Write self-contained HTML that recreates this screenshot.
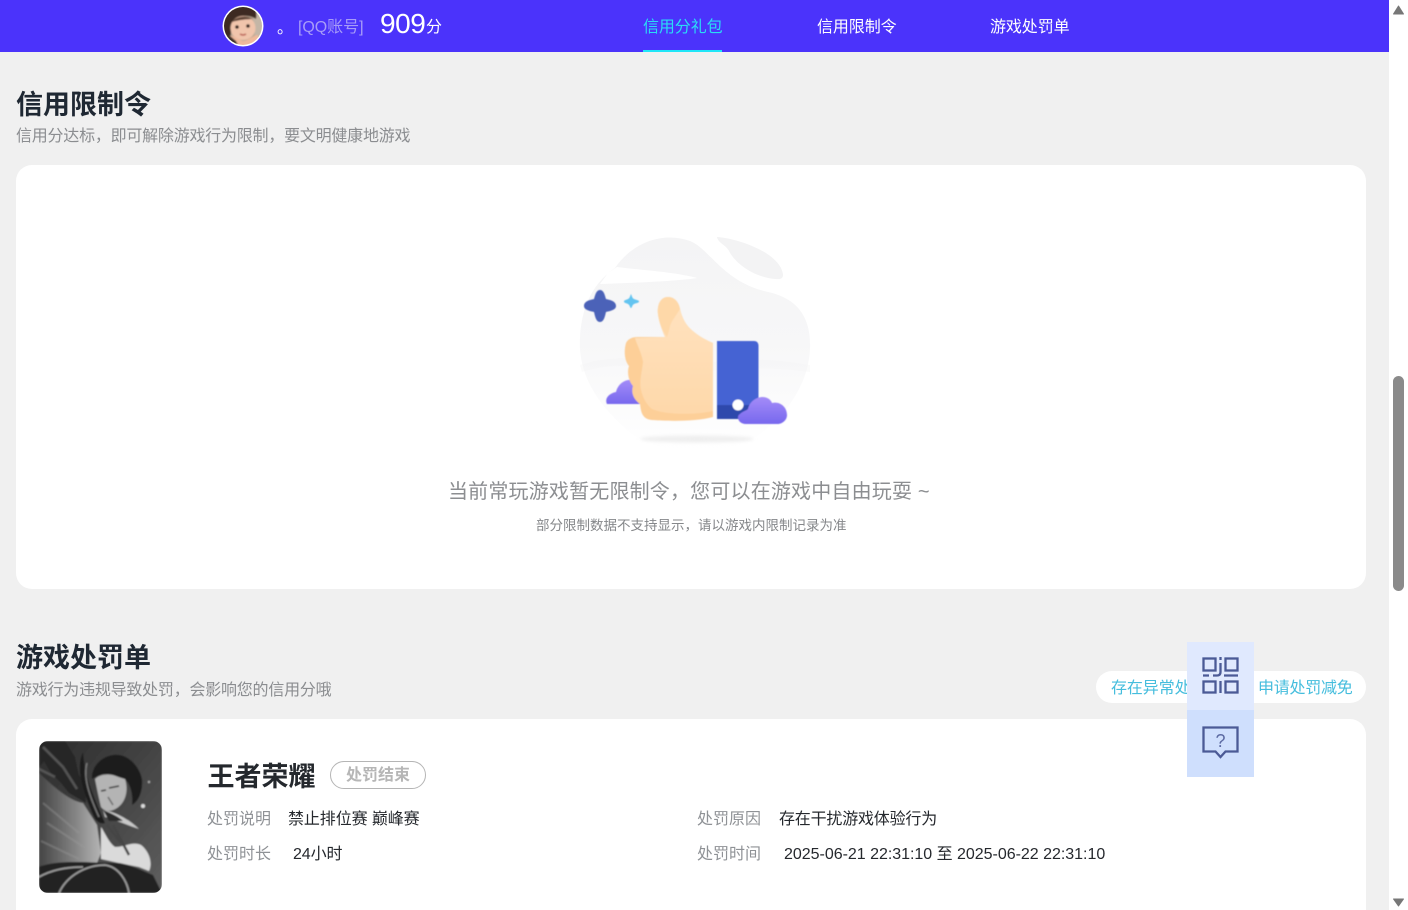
<!DOCTYPE html>
<html lang="zh-CN">
<head>
<meta charset="utf-8">
<title>信用限制令</title>
<style>
html,body{margin:0;padding:0;width:1408px;height:910px;overflow:hidden;background:#fff}
body{position:relative;font-family:"Liberation Sans","Noto Sans CJK SC",sans-serif}
.a{position:absolute;white-space:nowrap;line-height:1}
.main{position:absolute;left:0;top:0;width:1389px;height:910px;background:#f0f0f0;overflow:hidden}
.nav{position:absolute;left:0;top:0;width:1389px;height:52px;background:#4b33fb}
.card{position:absolute;background:#fff;border-radius:16px}
.h{font-size:27px;font-weight:700;color:#1f2833}
.s{font-size:16px;color:#8b8d90;letter-spacing:-.23px}
.l{font-size:16px;color:#8f9296}
.v{font-size:16px;color:#25282d;letter-spacing:-.1px}
svg{position:absolute;display:block}
</style>
</head>
<body>
<div class="main">
  <div class="nav"></div>

  <svg style="left:222px;top:5px" width="42" height="42" viewBox="0 0 42 42">
    <defs>
      <clipPath id="av"><circle cx="21" cy="21" r="19"/></clipPath>
      <filter id="b1" x="-10%" y="-10%" width="120%" height="120%"><feGaussianBlur stdDeviation=".7"/></filter>
    </defs>
    <circle cx="21" cy="21" r="20.500" fill="#fff"/>
    <g clip-path="url(#av)"><g filter="url(#b1)">
      <rect width="42" height="42" fill="#bda994"/>
      <path d="M30 0H44V42H34Z" fill="#c4b6a6"/>
      <path d="M0 0H32C34 5 35 9 34 14 28 10 20 10 14 14 10 18 9 24 9 30L4 36 0 34Z" fill="#3d2a22"/>
      <ellipse cx="21" cy="23" rx="12.500" ry="12" fill="#f1c5ac"/>
      <path d="M10 17C14 11 25 10 31 14 26 14 16 15 10 17Z" fill="#5a3f33"/>
      <circle cx="15" cy="22" r="1.800" fill="#2b1b15"/><circle cx="26" cy="21" r="1.800" fill="#2b1b15"/>
      <path d="M18 29Q21 31 24 29" stroke="#b8594f" stroke-width="1.400" fill="none"/>
      <path d="M7 31C12 30 17 35 21 36 26 36 32 30 36 30 37 36 36 42 30 44H12Z" fill="#efb99c"/>
      <path d="M0 32 7 30 14 36 18 44H0Z" fill="#3d3128"/>
    </g></g>
  </svg>
  <div class="a" style="left:277px;top:21px;font-size:16px;color:#fff">。</div>
  <div class="a" style="left:298px;top:20px;font-size:16px;color:#a79cf8;letter-spacing:-.05px">[QQ账号]</div>
  <div class="a" style="left:380px;top:10px;font-size:28px;color:#fff;letter-spacing:-.45px">909</div>
  <div class="a" style="left:426px;top:20px;font-size:16px;color:#fff">分</div>
  <div class="a" style="left:643px;top:20px;font-size:16px;color:#2adcf5;letter-spacing:-.1px">信用分礼包</div>
  <div style="position:absolute;left:643px;top:50px;width:79px;height:2px;background:#20e6f7"></div>
  <div class="a" style="left:817px;top:20px;font-size:16px;color:#fff;letter-spacing:-.1px">信用限制令</div>
  <div class="a" style="left:990px;top:20px;font-size:16px;color:#fff;letter-spacing:-.1px">游戏处罚单</div>

  <div class="a h" style="left:16px;top:92px">信用限制令</div>
  <div class="a s" style="left:16px;top:129px">信用分达标，即可解除游戏行为限制，要文明健康地游戏</div>

  <div class="card" style="left:16px;top:165px;width:1350px;height:424px"></div>

  <svg style="left:570px;top:225px" width="250" height="240" viewBox="570 225 250 240">
    <defs>
      <linearGradient id="bg" x1="0" y1="0" x2="0" y2="1"><stop offset="0" stop-color="#f4f4f5"/><stop offset=".5" stop-color="#f7f7f8"/><stop offset="1" stop-color="#fff"/></linearGradient>
      <linearGradient id="cl" x1="0" y1="0" x2="0" y2="1"><stop offset="0" stop-color="#a48cf8"/><stop offset="1" stop-color="#7768ee"/></linearGradient>
      <linearGradient id="hand" x1="0" y1="0" x2="0" y2="1"><stop offset="0" stop-color="#ffe3c0"/><stop offset="1" stop-color="#fed8aa"/></linearGradient>
      <filter id="b2" x="-5%" y="-5%" width="110%" height="110%"><feGaussianBlur stdDeviation=".45"/></filter>
      <filter id="b3" x="-10%" y="-50%" width="120%" height="200%"><feGaussianBlur stdDeviation="1.500"/></filter>
    </defs>
    <path d="M615 268C632 243 662 231 690 241 710 249 723 282 768 292 800 299 811 320 810 348 809 384 785 418 755 437 725 456 660 459 627 430 595 402 578 372 580 338 581 312 590 285 615 268Z" fill="url(#bg)"/>
    <path d="M617 267C640 270 675 272 697 278 680 281 630 283 600 284L608 273Z" fill="#fff"/>
    <path d="M717 237C735 238 772 250 781 268 785 277 783 280 775 279 753 277 735 263 729 251 726 245 718 243 717 237Z" fill="#f3f3f4"/>
    <path d="M580 365C610 355 640 358 665 362 700 368 740 352 810 365V372C740 362 700 376 660 370 630 364 605 364 582 372Z" fill="#f3f3f4" opacity=".35"/>
    <ellipse cx="697" cy="439" rx="57" ry="3.500" fill="#efefef" filter="url(#b3)"/>
    <g filter="url(#b2)">
      <path d="M607 404C604 398 610 393 616 392 619 380 632 376 640 384V404Z" fill="url(#cl)"/>
      <path d="M600 290C604 290 605 296 606 299 610 300 616 301 616 306 616 310 610 311 606 312 605 316 604 322 600 322 596 322 595 316 594 312 590 311 584 310 584 306 584 301 590 300 594 299 595 296 596 290 600 290Z" fill="#4b62b8"/>
      <path d="M631 294C632 296 632 298 634 299 636 300 639 300 639 301.500 639 303 636 303 634 304 632 305 632 308 631 308 630 308 630 305 628 304 626 303 624 303 624 301.500 624 300 626 300 628 299 630 298 630 296 631 294Z" fill="#63c4f0"/>
      <path d="M658 314C657 304 661 297 668 297 675 297 679 303 680 309 682 318 686 326 694 332 700 337 706 340 713 343V417C695 422 665 421 652 420 642 419 641 412 640 404 633 399 631 392 633 386 628 380 627 372 629 366 624 360 624 350 626 343 628 339 632 337 638 337H665C662 330 659 322 658 314Z" fill="#fdcf98"/>
      <path d="M658 314C657 304 661 297 668 297 675 297 679 303 680 309 682 318 686 326 694 332 700 337 706 340 713 343V411C695 415 665 415 652 409 646 404 643 398 641 390 639 382 642 372 643 362 642 354 637 345 635 338L665 337C662 330 659 322 658 314Z" fill="url(#hand)"/>
      <path d="M658 314C657 304 661 297 668 297 675 297 679 303 680 309 676 316 672 320 670 326 669 331 668 334 667 337 662 330 659 322 658 314Z" fill="#fed8a8"/>
      <path d="M717 341H754C757 341 758.500 343 758.500 346V419H717Z" fill="#4563d3"/>
      <path d="M717 405H750V419H717Z" fill="#2f48ac"/>
      <circle cx="738" cy="405" r="5.500" fill="#fff"/>
      <path d="M746 424C738 424 736 416 740 414 743 411 746 411 748 409 751 396 768 393 772 403 780 401 787 407 787 415 787 421 781 424 778 424Z" fill="url(#cl)"/>
    </g>
  </svg>

  <div class="a" style="left:448px;top:482px;font-size:20px;color:#8c8e91;letter-spacing:.18px">当前常玩游戏暂无限制令，您可以在游戏中自由玩耍 ~</div>
  <div class="a" style="left:536px;top:519px;font-size:13.500px;color:#85878a">部分限制数据不支持显示，请以游戏内限制记录为准</div>

  <div class="a h" style="left:16px;top:645px">游戏处罚单</div>
  <div class="a s" style="left:16px;top:683px">游戏行为违规导致处罚，会影响您的信用分哦</div>

  <div style="position:absolute;left:1096px;top:671px;width:270px;height:32px;background:#fff;border-radius:16px"></div>
  <div class="a" style="left:1111px;top:681px;font-size:16px;color:#45bddd;letter-spacing:-.1px">存在异常处罚吗？</div>
  <div class="a" style="left:1258px;top:681px;font-size:16px;color:#45bddd;letter-spacing:-.25px">申请处罚减免</div>

  <div class="card" style="left:16px;top:719px;width:1350px;height:191px;border-radius:16px 16px 0 0"></div>

  <svg style="left:39px;top:741px" width="123" height="152" viewBox="0 0 123 152">
    <defs>
      <clipPath id="gm"><rect width="123" height="152" rx="9"/></clipPath>
      <linearGradient id="gb" x1="0" y1="0" x2="1" y2="1"><stop offset="0" stop-color="#2b2b2b"/><stop offset=".5" stop-color="#444"/><stop offset="1" stop-color="#5f5f5f"/></linearGradient>
      <linearGradient id="gw" x1="0" y1="0" x2="1" y2="0"><stop offset="0" stop-color="#444"/><stop offset=".55" stop-color="#808080"/><stop offset="1" stop-color="#b5b5b5"/></linearGradient>
      <filter id="b4" x="-5%" y="-5%" width="110%" height="110%"><feGaussianBlur stdDeviation=".8"/></filter>
    </defs>
    <g clip-path="url(#gm)"><g filter="url(#b4)">
      <rect width="123" height="152" fill="url(#gb)"/>
      <path d="M0 32C14 45 30 60 44 62L58 84 62 112 58 122 30 128 0 124Z" fill="url(#gw)"/>
      <path d="M4 62 40 92M8 82 48 108M2 100 40 118" stroke="#9a9a9a" stroke-width="2" fill="none" opacity=".4"/>
      <path d="M0 0H26L36 16 40 34 46 44 47 62 30 52 22 42 12 32 5 20 0 26Z" fill="#262626"/>
      <path d="M4 6 24 26 38 48M0 28 16 36" stroke="#555" stroke-width="2.500" fill="none"/>
      <path d="M44 11C36 28 44 50 54 74 56 80 62 84 66 82 58 62 46 40 44 11Z" fill="#1f1f1f"/>
      <path d="M48 22C44 36 50 54 60 76" stroke="#7a7a7a" stroke-width="1.500" fill="none"/>
      <path d="M56 38C62 32 74 32 86 38 90 50 86 62 78 67 72 71 66 71 62 66 60 58 58 48 56 38Z" fill="#b4b4b4"/>
      <path d="M53 38C52 28 60 16 74 14 88 12 100 24 103 38 104 50 100 60 93 64 94 54 92 44 86 38 78 36 72 32 64 33 60 34 56 36 53 38Z" fill="#1d1d1d"/>
      <path d="M70 47 80 45M62 50 67 49" stroke="#333" stroke-width="1.500"/>
      <path d="M69 56 74 64" stroke="#666" stroke-width="1.500"/>
      <path d="M64 69C74 70 90 78 100 88 88 84 74 78 66 76Z" fill="#c9c9c9"/>
      <path d="M64 69C72 72 80 76 84 80L70 80Z" fill="#2a2a2a"/>
      <path d="M62 86C66 92 70 102 76 106 86 106 94 100 102 104 110 110 114 122 110 130L100 126 80 122 62 118Z" fill="#dadada"/>
      <path d="M68 84 82 102M74 84 90 114" stroke="#444" stroke-width="2.500" fill="none"/>
      <path d="M0 126C20 118 50 122 80 122 92 124 104 130 114 134L123 152H0Z" fill="#212121"/>
      <path d="M20 152C28 134 48 124 66 124 80 126 88 140 90 152M0 136C14 128 30 126 44 126" stroke="#9c9c9c" stroke-width="1.800" fill="none"/>
      <circle cx="110" cy="41" r="1.200" fill="#aaa"/><circle cx="104" cy="65" r="2" fill="#ddd"/>
    </g></g>
  </svg>

  <div class="a" style="left:207.500px;top:764px;font-size:27px;font-weight:700;color:#24282d">王者荣耀</div>
  <div style="position:absolute;left:330px;top:761px;width:94px;height:26px;border:1px solid #b5b5b5;border-radius:14px;background:#fff"></div>
  <div class="a" style="left:346px;top:768px;font-size:16px;font-weight:700;color:#b6b6b6">处罚结束</div>

  <div class="a l" style="left:207px;top:812px">处罚说明</div>
  <div class="a v" style="left:288px;top:812px">禁止排位赛 巅峰赛</div>
  <div class="a l" style="left:697px;top:812px">处罚原因</div>
  <div class="a v" style="left:779px;top:812px;letter-spacing:-.2px">存在干扰游戏体验行为</div>
  <div class="a l" style="left:207px;top:847px">处罚时长</div>
  <div class="a v" style="left:293px;top:847px">24小时</div>
  <div class="a l" style="left:697px;top:847px">处罚时间</div>
  <div class="a v" style="left:784px;top:847px;letter-spacing:-.02px">2025-06-21 22:31:10 至 2025-06-22 22:31:10</div>

  <div style="position:absolute;left:1187px;top:642px;width:67px;height:68px;background:#e0e9fe"></div>
  <div style="position:absolute;left:1187px;top:710px;width:67px;height:67px;background:#cfdffd"></div>
  <svg style="left:1187px;top:642px" width="67" height="135" viewBox="0 0 67 135" fill="none" stroke="#4b5a96" stroke-width="2.300">
    <rect x="16.500" y="16.500" width="12" height="12"/>
    <rect x="38.500" y="16.500" width="12" height="12"/>
    <rect x="16.500" y="39.500" width="12" height="11"/>
    <rect x="38.500" y="39.500" width="12" height="11"/>
    <path d="M33.500 15V18M33.500 21V30C33.500 32 32.500 33.500 30 33.500H26M16 33.500H22M37 33.500H51M33.500 39V51"/>
    <path d="M16.500 85.500H50.500V109.500H38.500L33.500 115 28.500 109.500H16.500Z"/>
    <text x="33.500" y="105" font-size="18" fill="#5c6aa3" stroke="none" text-anchor="middle" font-family="Liberation Sans, sans-serif">?</text>
  </svg>
</div>

<div style="position:absolute;left:1393px;top:376px;width:11px;height:215px;border-radius:6px;background:#8a8a8a"></div>
<svg style="left:1389px;top:0" width="19" height="20" viewBox="0 0 19 20"><path d="M9.500 6 14.500 14H4.500Z" fill="#777" stroke="#777" stroke-linejoin="round"/></svg>
<svg style="left:1389px;top:890px" width="19" height="20" viewBox="0 0 19 20"><path d="M4.500 9H14.500L9.500 16Z" fill="#777" stroke="#777" stroke-linejoin="round"/></svg>
</body>
</html>
